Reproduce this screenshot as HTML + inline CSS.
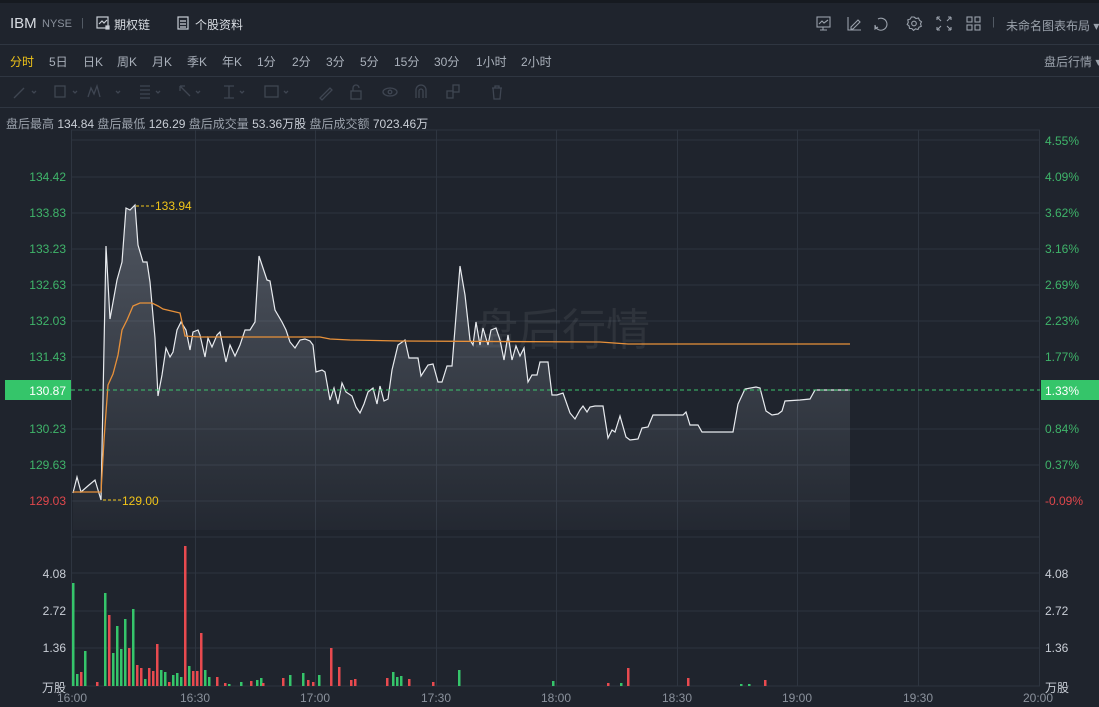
<!DOCTYPE html>
<html><head><meta charset="utf-8"><style>
*{margin:0;padding:0;box-sizing:border-box}
body{width:1099px;height:707px;background:#1f242d;font-family:"Liberation Sans","Noto Sans CJK SC",sans-serif;color:#c9ced6;position:relative;overflow:hidden;font-size:12px}
.a{position:absolute;white-space:nowrap}
.tab{position:absolute;top:53px;font-size:12px;color:#aab1bb;white-space:nowrap}
.hl{position:absolute;left:0;width:1099px;height:1px;background:#2f3641}
</style></head><body>
<div class="a" style="left:0;top:0;width:1099px;height:3px;background:#161a20"></div>
<div class="a" style="left:10px;top:15px;font-size:15px;color:#d8dce2">IBM</div>
<div class="a" style="left:42px;top:18px;font-size:11px;color:#8a919c">NYSE</div>
<div class="a" style="left:81px;top:17px;font-size:11px;color:#5a616c">|</div>
<svg class="a" style="left:96px;top:16px" width="14" height="14" viewBox="0 0 14 14" fill="none" stroke="#c9ced6" stroke-width="1.2"><rect x="1" y="1" width="11" height="11"/><path d="M3 8l3-3 2 2 3-3"/><rect x="10" y="10" width="3" height="3" fill="#c9ced6"/></svg>
<div class="a" style="left:114px;top:16px;font-size:12px;color:#d8dce2">期权链</div>
<svg class="a" style="left:177px;top:16px" width="12" height="14" viewBox="0 0 12 14" fill="none" stroke="#c9ced6" stroke-width="1.2"><rect x="1" y="1" width="10" height="12"/><path d="M3 5h6M3 8h6M3 11h6"/></svg>
<div class="a" style="left:195px;top:16px;font-size:12px;color:#d8dce2">个股资料</div>
<svg class="a" style="left:816px;top:15px" width="170" height="17" viewBox="0 0 170 17" fill="none" stroke="#9aa1ab" stroke-width="1.1">
<rect x="1" y="2" width="13" height="10"/><path d="M3 9l3-3 2 2 4-3M7 12v3M4 15h7"/>
<path d="M32 2v13h13M35 12l7-7 2 2-7 7h-2z"/>
<path d="M62 4a6 6 0 1 1-3 6M59 10l0 4 3-2"/>
<circle cx="98" cy="8.5" r="2.3"/><path d="M98 2l2 1.5 2.5-.5 1 2.3 2 1.5-1 2 .8 2.5-2.3 1-1 2.2-2.5-.6-2 1.5-1.6-1.8-2.4-.2-.4-2.5-1.9-1.4 1.1-2.2-.5-2.4 2.4-.8 1.2-2.1z"/>
<path d="M121 2h3M121 2v3M121 2l4 4M135 2h-3M135 2v3M135 2l-4 4M121 15h3M121 15v-3M121 15l4-4M135 15h-3M135 15v-3M135 15l-4-4"/>
<rect x="151" y="2" width="5" height="5"/><rect x="159" y="2" width="5" height="5"/><rect x="151" y="10" width="5" height="5"/><rect x="159" y="10" width="5" height="5"/></svg>
<div class="a" style="left:992px;top:16px;font-size:11px;color:#5a616c">|</div>
<div class="a" style="left:1006px;top:17px;font-size:12px;color:#9aa1ab">未命名图表布局 ▾</div>
<div class="hl" style="top:44px"></div>
<div class="tab" style="left:10px;color:#f0c419">分时</div>
<div class="tab" style="left:49px">5日</div>
<div class="tab" style="left:83px">日K</div>
<div class="tab" style="left:117px">周K</div>
<div class="tab" style="left:152px">月K</div>
<div class="tab" style="left:187px">季K</div>
<div class="tab" style="left:222px">年K</div>
<div class="tab" style="left:257px">1分</div>
<div class="tab" style="left:292px">2分</div>
<div class="tab" style="left:326px">3分</div>
<div class="tab" style="left:360px">5分</div>
<div class="tab" style="left:394px">15分</div>
<div class="tab" style="left:434px">30分</div>
<div class="tab" style="left:476px">1小时</div>
<div class="tab" style="left:521px">2小时</div>
<div class="tab" style="left:1044px;color:#9aa1ab">盘后行情 ▾</div>
<div class="hl" style="top:76px"></div>
<svg class="a" style="left:10px;top:82px" width="500" height="20" viewBox="0 0 500 20" fill="none" stroke="#3f4652" stroke-width="1.3">
<path d="M4 16l10-10"/><path d="M22 9l2 2 2-2" /><rect x="45" y="4" width="10" height="11"/><path d="M63 9l2 2 2-2"/><path d="M78 15l3-9 3 6 3-8 3 11"/><path d="M106 9l2 2 2-2"/><path d="M130 4h10M130 8h10M130 12h10M130 16h10"/><path d="M146 9l2 2 2-2"/><path d="M170 4l10 10M170 4h5M170 4v5"/><path d="M186 9l2 2 2-2"/><path d="M214 4h10M219 4v12M214 16h10"/><path d="M230 9l2 2 2-2"/><rect x="255" y="4" width="13" height="11"/><path d="M274 9l2 2 2-2"/><path d="M310 16l10-10 2 2-10 10z"/><rect x="341" y="9" width="10" height="8"/><path d="M343 9V6a3 3 0 0 1 6 0"/><ellipse cx="380" cy="10" rx="7" ry="4"/><circle cx="380" cy="10" r="1.8"/><path d="M406 16V8a5 5 0 0 1 10 0v8M409 16V9a2 2 0 0 1 4 0v7"/><rect x="437" y="9" width="6" height="7"/><rect x="443" y="3" width="6" height="7"/><path d="M482 6h10M485 6V4h4v2M483 6l1 11h6l1-11"/></svg>
<div class="hl" style="top:107px"></div>
<div class="a" style="left:6px;top:115px;font-size:12px;color:#c9ced6"><span style="color:#9aa1ab">盘后最高</span> 134.84 <span style="color:#9aa1ab">盘后最低</span> 126.29 <span style="color:#9aa1ab">盘后成交量</span> 53.36万股 <span style="color:#9aa1ab">盘后成交额</span> 7023.46万</div>

<svg class="a" style="left:0;top:0" width="1099" height="707" viewBox="0 0 1099 707">
<defs><linearGradient id="g" x1="0" y1="0" x2="0" y2="1"><stop offset="0" stop-color="#aab2bf" stop-opacity="0.35"/><stop offset="1" stop-color="#aab2bf" stop-opacity="0.03"/></linearGradient></defs>
<g stroke="#2e3540" stroke-width="1">
<path d="M71 130H1040M71 140H1040M71 177H1040M71 213H1040M71 249H1040M71 285H1040M71 321H1040M71 357H1040M71 429H1040M71 465H1040M71 501H1040M71 537H1040M71 573H1040M71 611H1040M71 648H1040M71 686H1040"/>
<path d="M71.5 130V686M195.5 130V686M315.5 130V686M436.5 130V686M556.5 130V686M677.5 130V686M797.5 130V686M918.5 130V686M1039.5 130V686"/>
</g>
<text x="562" y="345" font-size="44" fill="#ffffff" fill-opacity="0.07" text-anchor="middle" font-family="Noto Sans CJK SC,sans-serif">盘后行情</text>
<path fill="url(#g)" d="M73 493L77 477L81 492L89 485L95 480L101 500L106 246L110 319L117 280L122 262L126 208L130 210L135 205L138 245L143 262L147 262L150 282L155 338L158 396L162 375L166 348L170 357L173 352L177 330L181 322L186 330L190 350L193 332L198 330L200 335L205 357L208 338L212 347L217 335L220 332L226 362L230 345L235 356L240 345L245 330L250 330L255 322L259 256L263 268L267 280L270 281L275 310L282 322L286 330L290 342L295 348L300 340L305 339L310 341L313 345L316 372L322 370L325 372L330 400L334 388L338 404L342 383L346 392L352 396L356 407L360 413L364 404L368 392L373 388L377 404L380 386L384 401L388 399L392 370L398 345L405 340L409 358L418 358L421 376L428 365L433 364L438 382L442 382L447 366L452 366L460 266L465 295L470 340L473 345L476 322L480 345L483 328L488 345L491 330L496 328L500 340L504 360L508 335L512 360L516 346L520 356L524 348L528 382L532 375L537 375L540 362L548 362L552 395L557 395L563 393L570 413L575 419L580 410L583 406L587 412L590 407L595 406L603 406L608 438L612 430L615 432L620 416L626 437L630 440L638 439L642 428L648 427L653 415L683 415L686 412L690 425L698 425L702 432L733 432L738 404L745 389L756 387L760 388L766 411L772 415L778 414L782 411L785 401L800 400L810 399L815 390L850 390L850 530L73 530Z"/>
<path fill="none" stroke="#e8ebef" stroke-width="1.2" d="M73 493L77 477L81 492L89 485L95 480L101 500L106 246L110 319L117 280L122 262L126 208L130 210L135 205L138 245L143 262L147 262L150 282L155 338L158 396L162 375L166 348L170 357L173 352L177 330L181 322L186 330L190 350L193 332L198 330L200 335L205 357L208 338L212 347L217 335L220 332L226 362L230 345L235 356L240 345L245 330L250 330L255 322L259 256L263 268L267 280L270 281L275 310L282 322L286 330L290 342L295 348L300 340L305 339L310 341L313 345L316 372L322 370L325 372L330 400L334 388L338 404L342 383L346 392L352 396L356 407L360 413L364 404L368 392L373 388L377 404L380 386L384 401L388 399L392 370L398 345L405 340L409 358L418 358L421 376L428 365L433 364L438 382L442 382L447 366L452 366L460 266L465 295L470 340L473 345L476 322L480 345L483 328L488 345L491 330L496 328L500 340L504 360L508 335L512 360L516 346L520 356L524 348L528 382L532 375L537 375L540 362L548 362L552 395L557 395L563 393L570 413L575 419L580 410L583 406L587 412L590 407L595 406L603 406L608 438L612 430L615 432L620 416L626 437L630 440L638 439L642 428L648 427L653 415L683 415L686 412L690 425L698 425L702 432L733 432L738 404L745 389L756 387L760 388L766 411L772 415L778 414L782 411L785 401L800 400L810 399L815 390L850 390"/>
<path fill="none" stroke="#e8913a" stroke-width="1.3" d="M73 492L101 492L104 440L108 385L113 374L118 355L122 330L127 320L133 306L140 303L152 303L158 306L163 309L180 313L182 322L185 336L200 337L320 337L330 339L350 340L400 341L600 342L628 344L700 344L850 344"/>
<path d="M71 390H1040" stroke="#3ec46d" stroke-width="1" stroke-dasharray="4,3"/>
<path d="M136 206H154M103 500H121" stroke="#f0c419" stroke-dasharray="3,2"/>
<text x="155" y="210" font-size="12" fill="#f0c419">133.94</text>
<text x="122" y="505" font-size="12" fill="#f0c419">129.00</text>
<g font-size="12" fill="#3fb46a" text-anchor="end">
<text x="66" y="181">134.42</text><text x="66" y="217">133.83</text><text x="66" y="253">133.23</text><text x="66" y="289">132.63</text><text x="66" y="325">132.03</text><text x="66" y="361">131.43</text><text x="66" y="433">130.23</text><text x="66" y="469">129.63</text><text x="66" y="505" fill="#e0474c">129.03</text></g>
<rect x="5" y="380" width="66" height="20" fill="#35c56a"/><text x="66" y="395" font-size="12" fill="#fff" text-anchor="end">130.87</text>
<rect x="1041" y="380" width="58" height="20" fill="#35c56a"/><text x="1045" y="395" font-size="12" fill="#fff">1.33%</text>
<g font-size="12" fill="#3fb46a"><text x="1045" y="145">4.55%</text><text x="1045" y="181">4.09%</text><text x="1045" y="217">3.62%</text><text x="1045" y="253">3.16%</text><text x="1045" y="289">2.69%</text><text x="1045" y="325">2.23%</text><text x="1045" y="361">1.77%</text><text x="1045" y="433">0.84%</text><text x="1045" y="469">0.37%</text><text x="1045" y="505" fill="#e0474c">-0.09%</text></g>
<g font-size="12" fill="#c9ced6"><text x="66" y="578" text-anchor="end">4.08</text><text x="66" y="615" text-anchor="end">2.72</text><text x="66" y="652" text-anchor="end">1.36</text><text x="66" y="692" text-anchor="end">万股</text>
<text x="1045" y="578">4.08</text><text x="1045" y="615">2.72</text><text x="1045" y="652">1.36</text><text x="1045" y="692">万股</text></g>
<g font-size="12" fill="#8a919c" text-anchor="middle"><text x="72" y="702">16:00</text><text x="195" y="702">16:30</text><text x="315" y="702">17:00</text><text x="436" y="702">17:30</text><text x="556" y="702">18:00</text><text x="677" y="702">18:30</text><text x="797" y="702">19:00</text><text x="918" y="702">19:30</text><text x="1038" y="702">20:00</text></g>
<g fill="#35c56a">
<rect x="72" y="583" width="2.5" height="103"/><rect x="76" y="674" width="2.5" height="12"/><rect x="84" y="651" width="2.5" height="35"/><rect x="104" y="593" width="2.5" height="93"/><rect x="112" y="653" width="2.5" height="33"/><rect x="116" y="626" width="2.5" height="60"/><rect x="120" y="649" width="2.5" height="37"/><rect x="124" y="619" width="2.5" height="67"/><rect x="132" y="609" width="2.5" height="77"/><rect x="144" y="679" width="2.5" height="7"/><rect x="160" y="670" width="2.5" height="16"/><rect x="164" y="672" width="2.5" height="14"/><rect x="172" y="675" width="2.5" height="11"/><rect x="176" y="673" width="2.5" height="13"/><rect x="180" y="677" width="2.5" height="9"/><rect x="188" y="666" width="2.5" height="20"/><rect x="204" y="670" width="2.5" height="16"/><rect x="208" y="677" width="2.5" height="9"/><rect x="228" y="684" width="2.5" height="2"/><rect x="240" y="682" width="2.5" height="4"/><rect x="256" y="680" width="2.5" height="6"/><rect x="260" y="678" width="2.5" height="8"/><rect x="289" y="675" width="2.5" height="11"/><rect x="302" y="673" width="2.5" height="13"/><rect x="318" y="675" width="2.5" height="11"/><rect x="392" y="672" width="2.5" height="14"/><rect x="396" y="677" width="2.5" height="9"/><rect x="400" y="676" width="2.5" height="10"/><rect x="458" y="670" width="2.5" height="16"/><rect x="552" y="681" width="2.5" height="5"/><rect x="620" y="683" width="2.5" height="3"/><rect x="740" y="684" width="2.5" height="2"/><rect x="748" y="684" width="2.5" height="2"/></g>
<g fill="#e84a4f">
<rect x="80" y="672" width="2.5" height="14"/><rect x="96" y="682" width="2.5" height="4"/><rect x="108" y="615" width="2.5" height="71"/><rect x="128" y="648" width="2.5" height="38"/><rect x="136" y="665" width="2.5" height="21"/><rect x="140" y="668" width="2.5" height="18"/><rect x="148" y="668" width="2.5" height="18"/><rect x="152" y="671" width="2.5" height="15"/><rect x="156" y="644" width="2.5" height="42"/><rect x="168" y="682" width="2.5" height="4"/><rect x="184" y="546" width="2.5" height="140"/><rect x="192" y="671" width="2.5" height="15"/><rect x="196" y="671" width="2.5" height="15"/><rect x="200" y="633" width="2.5" height="53"/><rect x="216" y="677" width="2.5" height="9"/><rect x="224" y="683" width="2.5" height="3"/><rect x="250" y="681" width="2.5" height="5"/><rect x="262" y="683" width="2.5" height="3"/><rect x="282" y="678" width="2.5" height="8"/><rect x="307" y="680" width="2.5" height="6"/><rect x="312" y="682" width="2.5" height="4"/><rect x="330" y="648" width="2.5" height="38"/><rect x="338" y="667" width="2.5" height="19"/><rect x="350" y="680" width="2.5" height="6"/><rect x="354" y="679" width="2.5" height="7"/><rect x="386" y="678" width="2.5" height="8"/><rect x="408" y="679" width="2.5" height="7"/><rect x="432" y="682" width="2.5" height="4"/><rect x="607" y="683" width="2.5" height="3"/><rect x="627" y="668" width="2.5" height="18"/><rect x="687" y="678" width="2.5" height="8"/><rect x="764" y="680" width="2.5" height="6"/></g>
</svg>
</body></html>
